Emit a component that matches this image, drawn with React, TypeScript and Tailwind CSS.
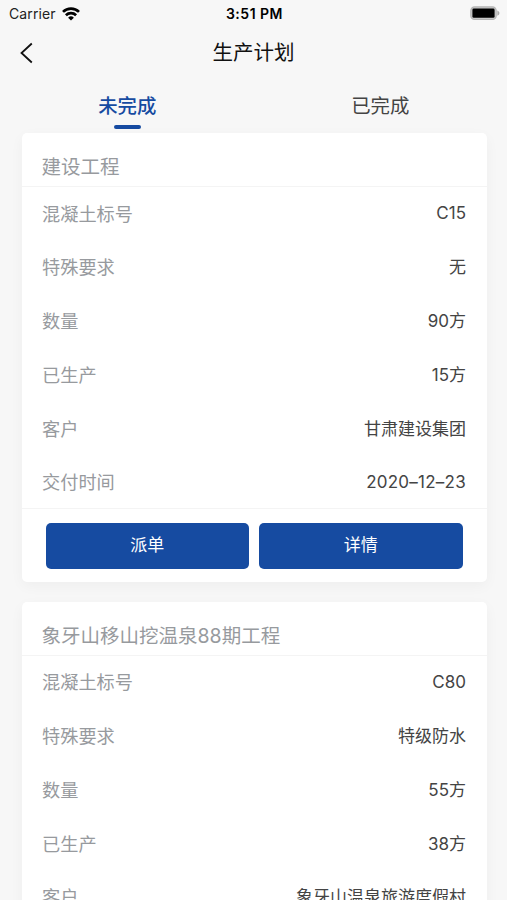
import React, { useState } from 'react';

interface Plan {
    id: number;
    name: string;
    fields: { label: string; value: string }[];
}

const TABS = ['未完成', '已完成'];

const PLANS: Plan[] = [
    {
        id: 1,
        name: '建设工程',
        fields: [
            { label: '混凝土标号', value: 'C15' },
            { label: '特殊要求', value: '无' },
            { label: '数量', value: '90方' },
            { label: '已生产', value: '15方' },
            { label: '客户', value: '甘肃建设集团' },
            { label: '交付时间', value: '2020–12–23' }
        ]
    },
    {
        id: 2,
        name: '象牙山移山挖温泉88期工程',
        fields: [
            { label: '混凝土标号', value: 'C80' },
            { label: '特殊要求', value: '特级防水' },
            { label: '数量', value: '55方' },
            { label: '已生产', value: '38方' },
            { label: '客户', value: '象牙山温泉旅游度假村' }
        ]
    }
];

const StatusBar: React.FC = () => (
    <div className="grid h-[27px] grid-cols-3 items-center pl-[9px] pr-[7px] font-['Inter',sans-serif] text-[14px] leading-[27px] text-[#222]">
        <div className="flex items-center gap-[6px]">
            <span className="tracking-[0.1px]">Carrier</span>
            <svg className="h-[14px] w-[18px]" viewBox="0 0 18 14" fill="none" stroke="#000" strokeWidth="2.7">
                <path d="M1 4.9a11.4 11.4 0 0 1 16 0" />
                <path d="M3.9 8.3a7.3 7.3 0 0 1 10.2 0" />
                <path d="M9 13.6 6.1 10.7a4.1 4.1 0 0 1 5.8 0z" fill="#000" stroke="none" />
            </svg>
        </div>
        <span className="text-center text-[14px] font-semibold tracking-[0.5px] text-black">3:51 PM</span>
        <svg className="h-[15px] w-[31px] justify-self-end" viewBox="0 0 31 15">
            <rect x="1.8" y="0.9" width="25.4" height="12.6" rx="3.8" fill="#c9c9c9" stroke="#b4b4b4" strokeWidth="1.2" />
            <rect x="3.4" y="2.6" width="22.2" height="9.2" rx="1.4" fill="#000" />
            <path d="M28.3 4.6c2.8 1.2 2.8 4 0 5.2z" fill="#ababab" />
        </svg>
    </div>
);

const PlanCard: React.FC<{ plan: Plan }> = ({ plan }) => (
    <div className="overflow-hidden rounded-[5px] bg-white shadow-[0_4px_14px_rgba(0,0,0,0.04)]">
        <div className="flex h-[54px] items-end border-b border-[#f4f4f4] px-5 pb-[5px]">
            <h2 className="text-[19.5px] leading-[28px] text-[#979a9e]">{plan.name}</h2>
        </div>
        {plan.fields.map((field) => (
            <div key={field.label} className="flex h-[53.8px] items-center justify-between pl-[20.5px] pr-[20.5px] pt-[0.5px]">
                <span className="text-[18.2px] text-[#979a9e]">{field.label}</span>
                <span className={`text-[17px] text-[#444] ${field.value.includes('–') ? 'tracking-[0.25px]' : ''}`}>
                    {field.value}
                </span>
            </div>
        ))}
        <div className="-mt-[2px] flex h-[74px] gap-[10px] border-t border-[#f4f4f4] px-6 pt-[14px]">
            <button className="h-[46px] flex-1 rounded-[5px] bg-[#164ba1] text-[17px] text-white">派单</button>
            <button className="h-[46px] flex-1 rounded-[5px] bg-[#164ba1] text-[17px] text-white">详情</button>
        </div>
    </div>
);

export default function App() {
    const [activeTab, setActiveTab] = useState(0);

    return (
        <div className="h-[900px] w-full overflow-hidden bg-[#f7f7f7] font-['Inter','Noto_Sans_CJK_SC',sans-serif]">
            <StatusBar />

            {/* Nav bar */}
            <div className="grid h-[52px] grid-cols-3 items-center px-[19px]">
                <svg className="h-[22px] w-[14px]" viewBox="0 0 14 22" fill="none" stroke="#111" strokeWidth="1.8">
                    <path d="M12.8 1.5 2.5 11l10.3 9.5" />
                </svg>
                <h1 className="pt-px text-center text-[20.5px] text-[#111]">生产计划</h1>
            </div>

            {/* Tabs */}
            <div className="grid h-[54px] grid-cols-2">
                {TABS.map((tab, index) => (
                    <button
                        key={tab}
                        onClick={() => setActiveTab(index)}
                        className={`flex flex-col items-center pt-[13px] text-[19.4px] leading-[28px] ${
                            activeTab === index ? 'pl-px font-medium text-[#164ba1]' : 'text-[#444]'
                        }`}
                    >
                        {tab}
                        {activeTab === index && <span className="mt-[5px] h-[4px] w-[27px] rounded-full bg-[#164ba1]" />}
                    </button>
                ))}
            </div>

            <div className="flex flex-col gap-5 pl-[21.5px] pr-[20.5px]">
                {PLANS.map((plan) => (
                    <PlanCard key={plan.id} plan={plan} />
                ))}
            </div>
        </div>
    );
}
